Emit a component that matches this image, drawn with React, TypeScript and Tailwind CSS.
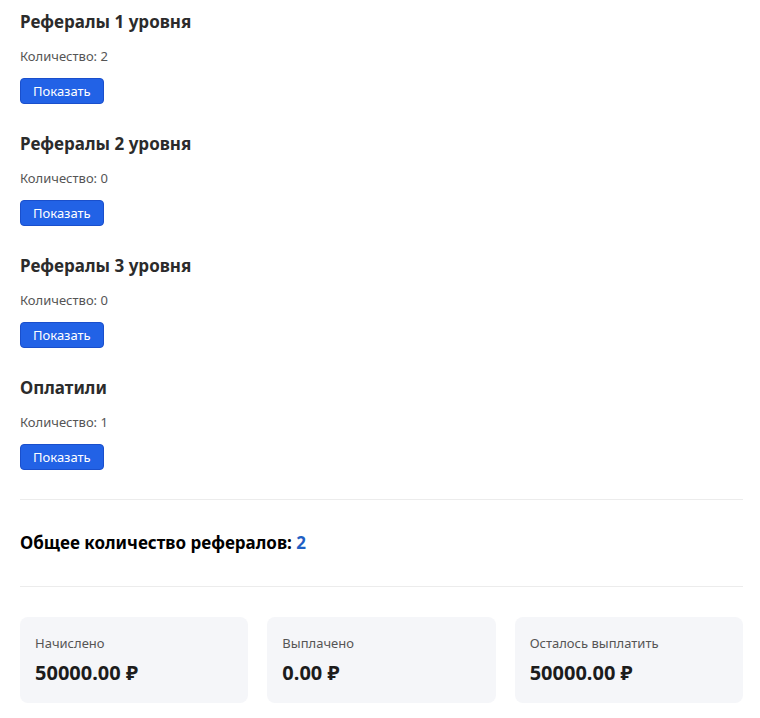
const groups = [
    { title: 'Рефералы 1 уровня', count: 2 },
    { title: 'Рефералы 2 уровня', count: 0 },
    { title: 'Рефералы 3 уровня', count: 0 },
    { title: 'Оплатили', count: 1 },
];

const stats = [
    { label: 'Начислено', value: '50000.00 ₽' },
    { label: 'Выплачено', value: '0.00 ₽' },
    { label: 'Осталось выплатить', value: '50000.00 ₽' },
];

const App = () => {
    return (
        <div className="min-h-screen w-full bg-white pl-5 pr-[17px] pt-[10px] font-['Noto_Sans','Open_Sans',sans-serif] text-[#333]">
            {/* Referral levels */}
            {groups.map((group, i) => (
                <div key={group.title} className={i > 0 ? 'mt-[28px]' : ''}>
                    <h3 className="text-[17px] leading-6 font-bold text-[#2b2b2b]">{group.title}</h3>
                    <p className="mt-3 text-[13px] leading-5 text-[#555]">Количество: {group.count}</p>
                    <button className="mt-3 h-[26px] rounded-[4px] border border-[#1a4fcc] bg-[#2262e6] px-3 text-[13px] leading-5 text-white">
                        Показать
                    </button>
                </div>
            ))}

            <hr className="mt-[29px] border-t border-[#ececec]" />

            <div className="py-[31px] text-[17px] leading-6 font-bold text-black">
                Общее количество рефералов: <span className="text-[#1f5fc4]">2</span>
            </div>

            <hr className="border-t border-[#ececec]" />

            {/* Balance cards */}
            <div className="mt-[30px] grid grid-cols-3 gap-[19px]">
                {stats.map((stat) => (
                    <div key={stat.label} className="rounded-[8px] bg-[#f5f6f9] px-[15px] pt-4 pb-4">
                        <div className="text-[13px] leading-5 text-[#555]">{stat.label}</div>
                        <div className="mt-[6px] text-[20px] leading-7 font-bold text-[#1c1c1c]">{stat.value}</div>
                    </div>
                ))}
            </div>
        </div>
    );
};

export default App;
